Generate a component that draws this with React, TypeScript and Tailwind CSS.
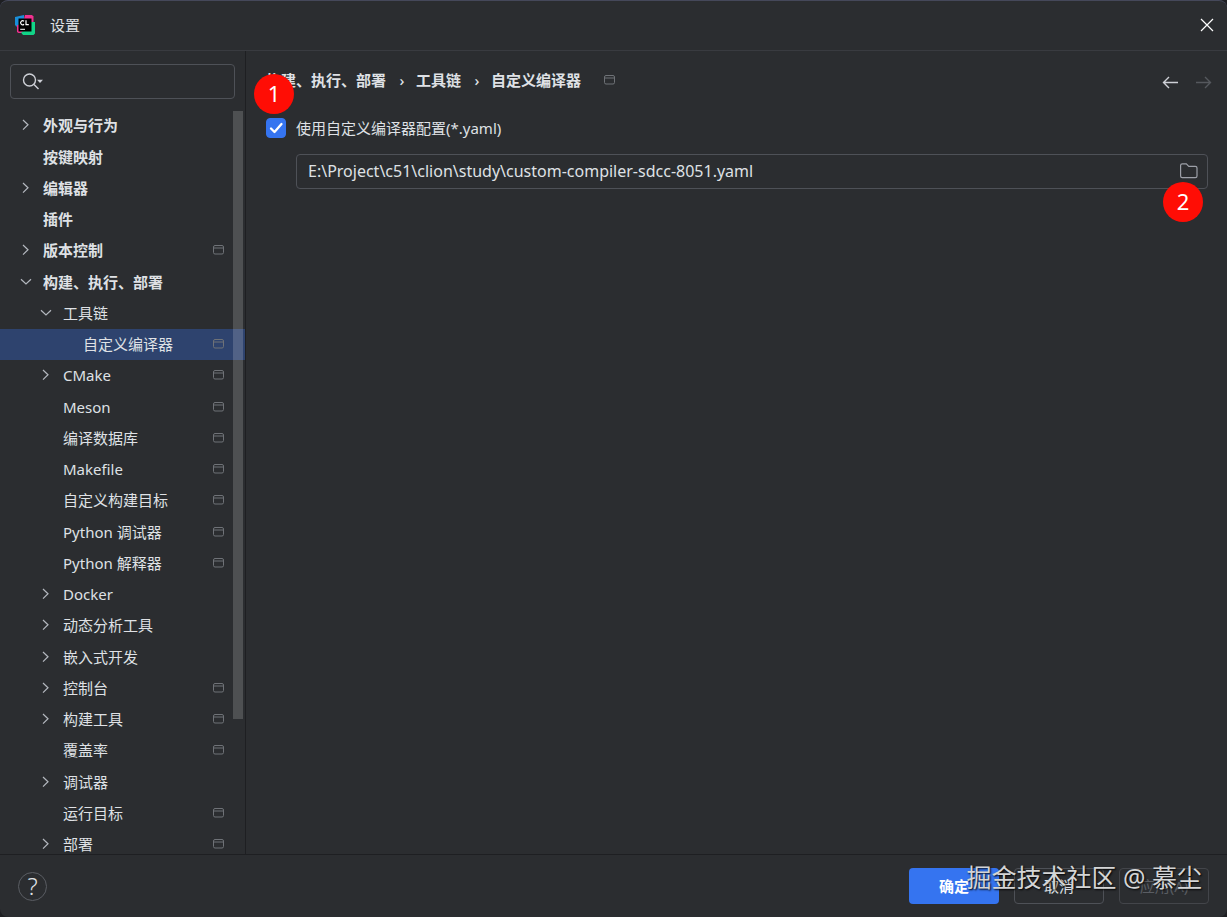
import React, { useState } from 'react';

type TreeItem = {
  label: string;
  level: 0 | 1 | 2;
  arrow?: 'open' | 'closed';
  project?: boolean;
  selected?: boolean;
};

const items: TreeItem[] = [
  { label: '外观与行为', level: 0, arrow: 'closed' },
  { label: '按键映射', level: 0 },
  { label: '编辑器', level: 0, arrow: 'closed' },
  { label: '插件', level: 0 },
  { label: '版本控制', level: 0, arrow: 'closed', project: true },
  { label: '构建、执行、部署', level: 0, arrow: 'open' },
  { label: '工具链', level: 1, arrow: 'open' },
  { label: '自定义编译器', level: 2, project: true, selected: true },
  { label: 'CMake', level: 1, arrow: 'closed', project: true },
  { label: 'Meson', level: 1, project: true },
  { label: '编译数据库', level: 1, project: true },
  { label: 'Makefile', level: 1, project: true },
  { label: '自定义构建目标', level: 1, project: true },
  { label: 'Python 调试器', level: 1, project: true },
  { label: 'Python 解释器', level: 1, project: true },
  { label: 'Docker', level: 1, arrow: 'closed' },
  { label: '动态分析工具', level: 1, arrow: 'closed' },
  { label: '嵌入式开发', level: 1, arrow: 'closed' },
  { label: '控制台', level: 1, arrow: 'closed', project: true },
  { label: '构建工具', level: 1, arrow: 'closed', project: true },
  { label: '覆盖率', level: 1, project: true },
  { label: '调试器', level: 1, arrow: 'closed' },
  { label: '运行目标', level: 1, project: true },
  { label: '部署', level: 1, arrow: 'closed', project: true },
];

const indent = { 0: 'pl-5', 1: 'pl-10', 2: 'pl-[60px]' };

const Logo: React.FC = () => (
  <svg className="h-5 w-5" viewBox="0 0 20 20" aria-hidden="true">
    <path d="M0 2 L9 0 L9 12 L2 12 L0 10Z" fill="#1a8fd8" />
    <path d="M10 0 H17 L18.500 1.500 V8 H8Z" fill="#f0318f" />
    <path d="M2 10 H8 V18 H3.500 L2 17Z" fill="#f0318f" />
    <path d="M16 7 H20 V18.500 L18.500 20 H8 L6 17.500 L12 14Z" fill="#12d488" />
    <rect x="3.500" y="3.500" width="13" height="13" fill="#000" />
    <path d="M9 6.300 A2 2 0 1 0 9 9.200 M11 5.300 V9.700 H13.800" fill="none" stroke="#fff" strokeWidth="1.200" />
    <path d="M5.200 14.300 H10" stroke="#fff" strokeWidth="1" />
  </svg>
);

const ProjectIcon: React.FC = () => (
  <svg className="h-3 w-3 shrink-0" viewBox="0 0 12 12" fill="none" stroke="#6f7277" aria-hidden="true">
    <rect x="1.500" y="1.500" width="10" height="8.500" rx="1.500" />
    <path d="M1.500 4 H11.500" />
  </svg>
);

const Chevron: React.FC<{ open: boolean }> = ({ open }) => (
  <svg className="h-3 w-3" viewBox="0 0 12 12" fill="none" stroke="#b4b8bf" strokeWidth="1.200" aria-hidden="true">
    <path d={open ? 'M1 3.200 L6 8 L11 3.200' : 'M3 1 L8 5.800 L3 10.600'} />
  </svg>
);

const TreeRow: React.FC<{ item: TreeItem }> = ({ item }) => (
  <li className={`flex h-[31px] items-center pr-[21px] pb-px nth-[4n+2]:h-8 ${indent[item.level]} ${item.selected ? 'bg-[#2e436e]' : ''}`}>
    <span className="w-[23px] shrink-0">{item.arrow && <Chevron open={item.arrow === 'open'} />}</span>
    <a href="#" className={`flex-1 truncate ${item.level === 0 ? 'font-bold' : ''}`}>
      {item.label}
    </a>
    {item.project && <ProjectIcon />}
  </li>
);

const Sidebar: React.FC = () => (
  <aside className="flex w-[246px] shrink-0 flex-col border-r border-[#1e1f22] pt-[13px]">
    <label className="mr-[10px] ml-[10px] flex h-[35px] shrink-0 items-center rounded border border-[#4e5157] px-[11px]">
      <svg className="h-5 w-6 shrink-0" viewBox="0 0 24 20" fill="none" stroke="#ced0d6" strokeWidth="1.400" aria-hidden="true">
        <circle cx="7.500" cy="8" r="6" />
        <path d="M12 12.500 L16.500 17" />
        <path d="M15 7.800 H21 L18 11Z" fill="#ced0d6" stroke="none" />
      </svg>
      <input type="text" aria-label="搜索" className="min-w-0 flex-1 bg-transparent outline-none" />
    </label>
    <div className="relative mt-[11px] min-h-0 flex-1 overflow-hidden">
      <ul>
        {items.map((item) => (
          <TreeRow key={item.label} item={item} />
        ))}
      </ul>
      {/* Scrollbar thumb */}
      <div className="absolute top-px right-[2px] h-[608px] w-[10px] bg-white/17" />
    </div>
  </aside>
);

const Badge: React.FC<{ n: number; className: string }> = ({ n, className }) => (
  <span className={`absolute flex h-10 w-10 items-center justify-center rounded-full bg-[#ff0d05] pb-[2px] text-[22px] text-white ${className}`}>
    {n}
  </span>
);

const Content: React.FC = () => {
  const [enabled, setEnabled] = useState(true);
  const [path, setPath] = useState('E:\\Project\\c51\\clion\\study\\custom-compiler-sdcc-8051.yaml');

  return (
    <main className="min-w-0 flex-1 pt-[13px] pr-[19px] pl-5">
      <div className="flex h-[34px] items-center justify-between">
        <nav className="flex items-center pb-[2px] font-bold">
          <a href="#">构建、执行、部署</a>
          <span className="w-[30px] pl-[2px] text-center font-medium">›</span>
          <a href="#">工具链</a>
          <span className="w-[30px] pl-[2px] text-center font-medium">›</span>
          <a href="#" className="mr-[22px]">自定义编译器</a>
          <ProjectIcon />
        </nav>
        <div className="-mr-1 flex gap-[15px]">
          <button aria-label="后退">
            <svg className="h-[18px] w-[18px]" viewBox="0 0 18 18" fill="none" stroke="#ced0d6" strokeWidth="1.400">
              <path d="M17 10.500 H2.500 M8 5 L2.500 10.500 L8 16" />
            </svg>
          </button>
          <button aria-label="前进" disabled>
            <svg className="h-[18px] w-[18px]" viewBox="0 0 18 18" fill="none" stroke="#55585d" strokeWidth="1.400">
              <path d="M2 10.500 H16.500 M11 5 L16.500 10.500 L11 16" />
            </svg>
          </button>
        </div>
      </div>

      <div className="relative mt-5">
        <label className="flex h-5 w-fit items-center gap-[10px]">
          <span className="relative h-5 w-5">
            <input
              type="checkbox"
              checked={enabled}
              onChange={(e) => setEnabled(e.target.checked)}
              className="peer block h-5 w-5 appearance-none rounded border border-[#6f737a] checked:border-[#3574f0] checked:bg-[#3574f0]"
            />
            <svg className="pointer-events-none absolute inset-0 hidden h-5 w-5 peer-checked:block" viewBox="0 0 20 20" fill="none" stroke="#fff" strokeWidth="2.300" strokeLinecap="round" strokeLinejoin="round">
              <path d="M5 10.500 L8.500 14 L15.500 6" />
            </svg>
          </span>
          使用自定义编译器配置(*.yaml)
        </label>
        <Badge n={1} className="-top-11 -left-3" />
      </div>

      <div className="relative mt-4 ml-[30px] flex h-[35px] items-center rounded border border-[#4e5157] pr-2 pb-[2px] pl-[11px]">
        <input
          type="text"
          aria-label="编译器配置文件"
          value={path}
          onChange={(e) => setPath(e.target.value)}
          className="min-w-0 flex-1 bg-transparent text-base leading-5 outline-none"
        />
        <button aria-label="浏览">
          <svg className="h-5 w-5" viewBox="0 0 20 20" fill="none" stroke="#9da0a8" strokeWidth="1.200">
            <path d="M1.600 4.500 Q1.600 2.800 3.300 2.800 H7.300 L9.800 5.300 H16.300 Q18 5.300 18 7 V15 Q18 16.700 16.300 16.700 H3.300 Q1.600 16.700 1.600 15Z" />
          </svg>
        </button>
        <Badge n={2} className="top-[27px] right-1" />
      </div>
    </main>
  );
};

const Footer: React.FC = () => (
  <footer className="relative flex h-[63px] shrink-0 items-center justify-between border-t border-[#1e1f22] pr-[18px] pl-[18px]">
    <button aria-label="帮助" className="h-[29px] w-[29px] rounded-full border border-[#5a5d63] text-2xl leading-[26px] font-light">
      ?
    </button>
    <div className="flex gap-[15px]">
      <button className="h-9 w-[90px] rounded bg-[#3574f0] font-bold text-white">确定</button>
      <button className="h-9 w-[90px] rounded border border-[#4e5157]">取消</button>
      <button disabled className="h-9 w-[90px] rounded border border-[#43454a] text-[#5a5d63]">
        应用(A)
      </button>
    </div>
    {/* Watermark */}
    <span className="pointer-events-none absolute top-[2px] right-[25px] text-[25px] leading-10 text-[#d4d5d6] [text-shadow:1px_1px_2px_#000]">
      掘金技术社区 @ 慕尘
    </span>
  </footer>
);

const App: React.FC = () => (
  <div className="h-screen bg-[#1e1f22]">
    <div className="flex h-full flex-col overflow-hidden rounded-lg border-t border-[#45485a] bg-[#2b2d30] font-['Noto_Sans','Noto_Sans_CJK_SC',sans-serif] text-[15px] leading-5 text-[#dfe1e5]">
      <header className="flex h-[50px] shrink-0 items-center border-b border-[#393b40] pr-[13px] pb-[2px] pl-[15px]">
        <Logo />
        <h1 className="ml-[15px] flex-1">设置</h1>
        <button aria-label="关闭">
          <svg className="h-[14px] w-[14px]" viewBox="0 0 14 14" stroke="#fff" strokeWidth="1.200">
            <path d="M1 1 L13 13 M13 1 L1 13" />
          </svg>
        </button>
      </header>
      <div className="flex min-h-0 flex-1">
        <Sidebar />
        <Content />
      </div>
      <Footer />
    </div>
  </div>
);

export default App;
